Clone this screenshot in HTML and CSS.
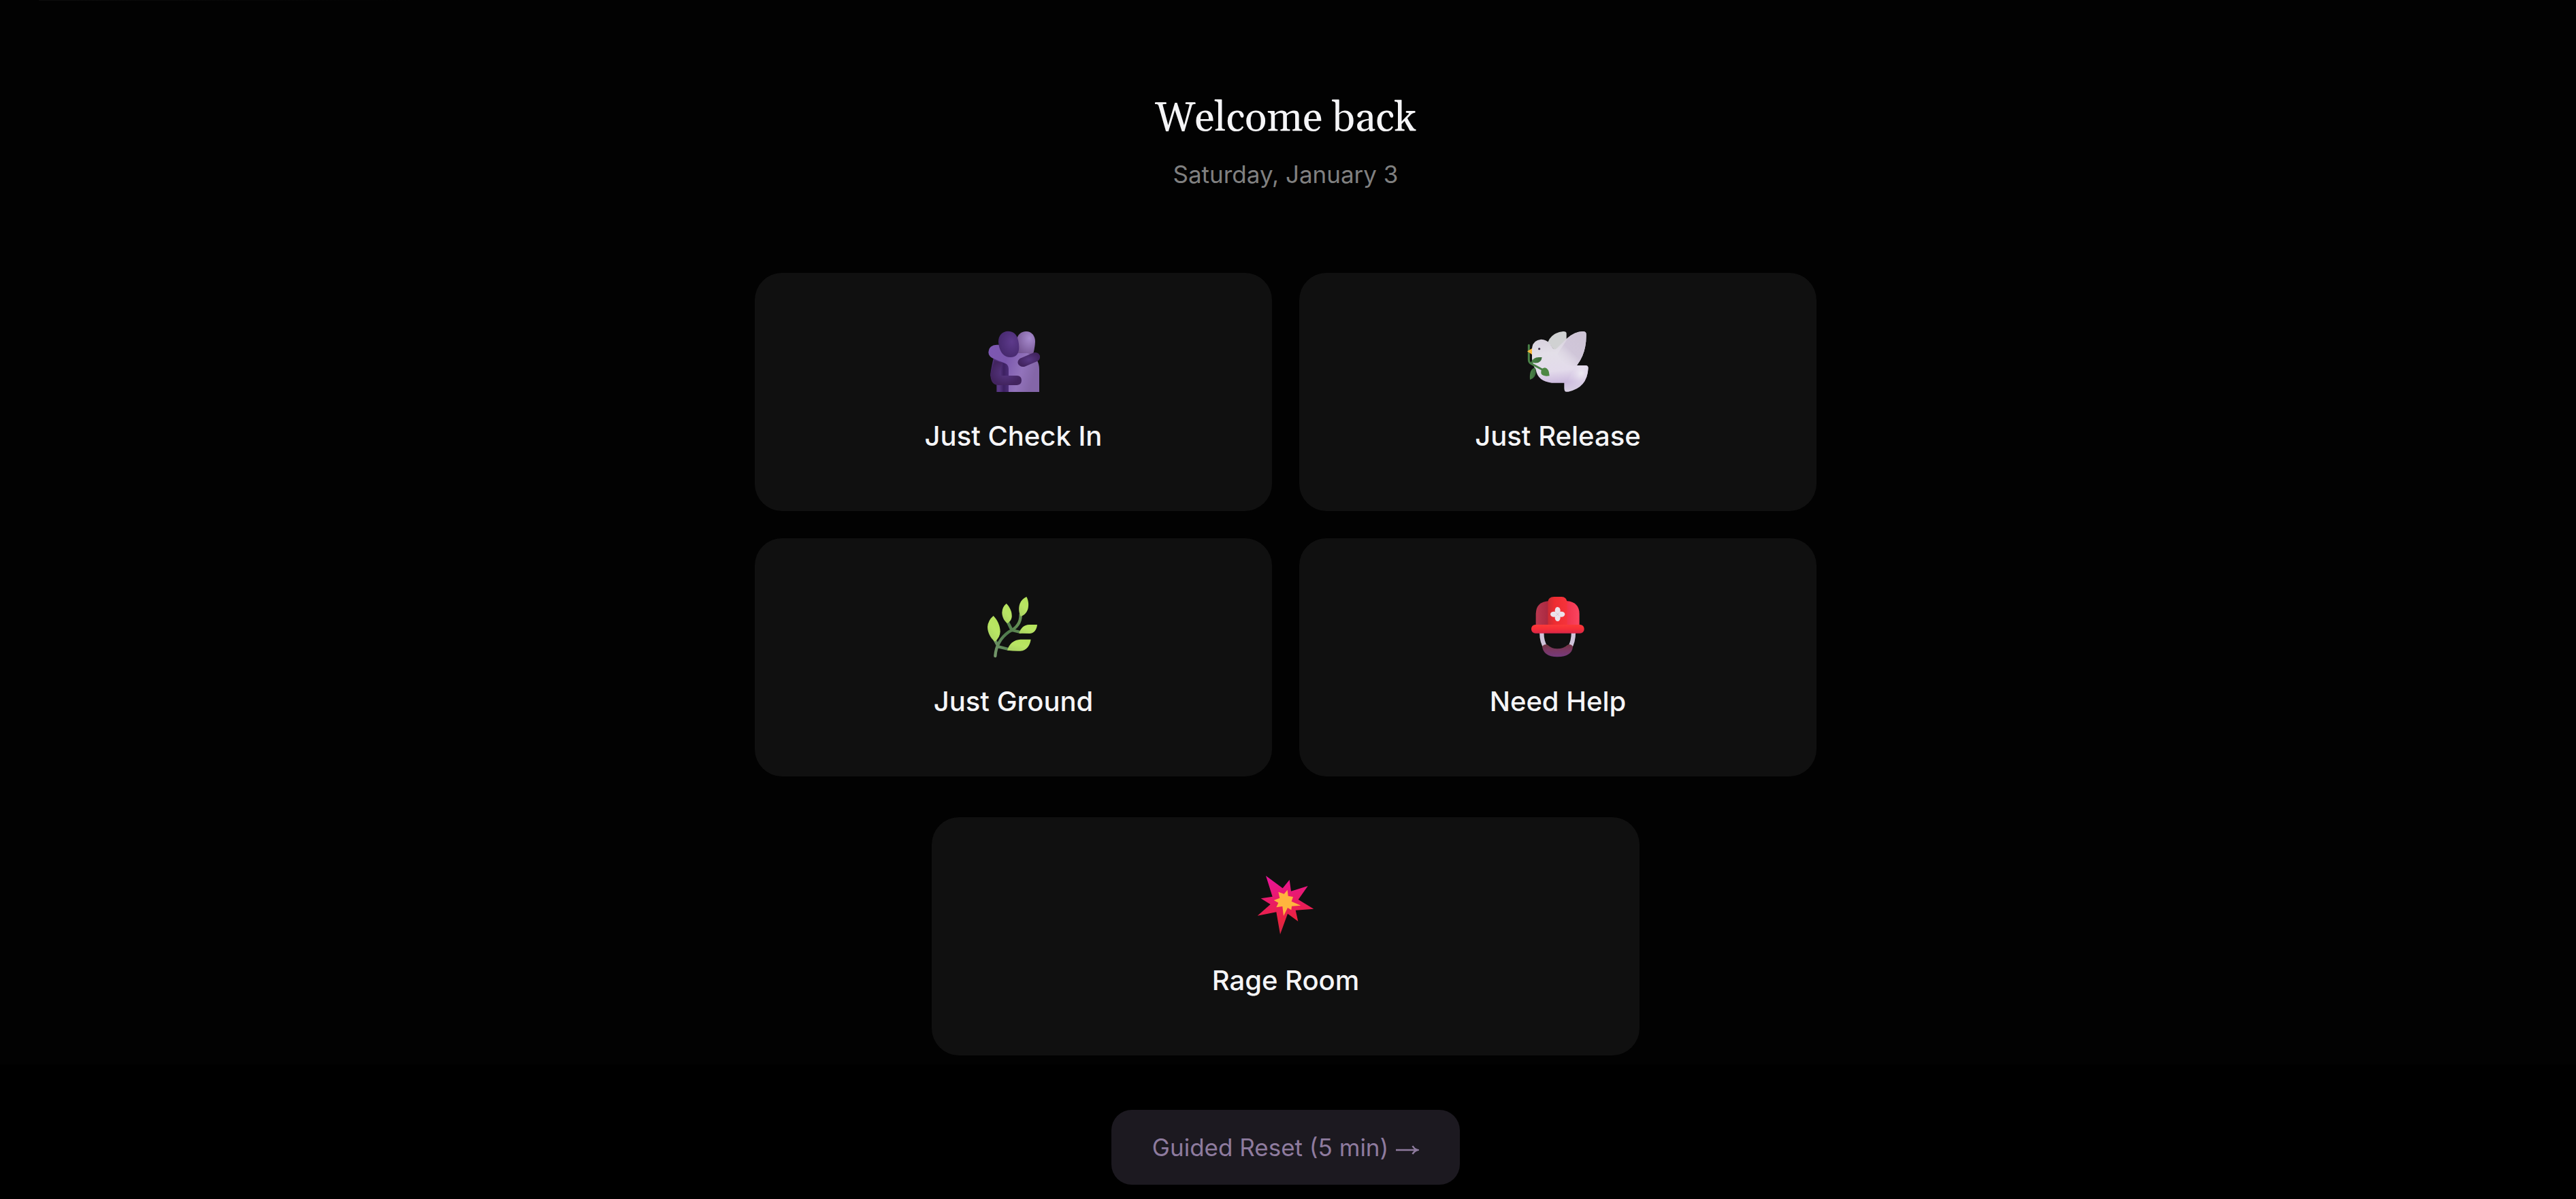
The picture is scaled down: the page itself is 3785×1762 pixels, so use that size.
FILE: index.html
```html
<!DOCTYPE html>
<html lang="en">
<head>
  <meta charset="UTF-8">
  <title>Welcome back</title>
  <link rel="stylesheet" href="styles.css">
</head>
<body>

  <main class="home">
    <header class="header">
      <h1 class="title">Welcome back</h1>
      <p class="date">Saturday, January 3</p>
    </header>

    <div class="cards">
      <button class="card">
        <svg class="icon" viewBox="-3 0 360 360">
          <defs>
            <radialGradient id="hugHead" cx="0.65" cy="0.4" r="0.7">
              <stop offset="0" stop-color="#5d3a8b"/>
              <stop offset="1" stop-color="#44276b"/>
            </radialGradient>
            <radialGradient id="hugHeadBack" cx="0.7" cy="0.3" r="0.8">
              <stop offset="0" stop-color="#a78bce"/>
              <stop offset="1" stop-color="#735391"/>
            </radialGradient>
            <linearGradient id="hugBody" x1="0" y1="0" x2="1" y2="0.3">
              <stop offset="0" stop-color="#7d58b4"/>
              <stop offset="0.4" stop-color="#7b57ad"/>
              <stop offset="0.75" stop-color="#9273bb"/>
              <stop offset="1" stop-color="#8466a8"/>
            </linearGradient>
            <linearGradient id="hugSide" x1="0" y1="0" x2="1" y2="0">
              <stop offset="0" stop-color="#482a72"/>
              <stop offset="0.45" stop-color="#593884"/>
              <stop offset="0.7" stop-color="#3c2060"/>
              <stop offset="1" stop-color="#50307d"/>
            </linearGradient>
            <radialGradient id="hugArm">
              <stop offset="0" stop-color="#583783"/>
              <stop offset="1" stop-color="#42245f"/>
            </radialGradient>
          </defs>
          <path d="M90 165L160 190V318H103V270L76 248Q74 235 90 165Z" fill="url(#hugSide)"/>
          <path d="M190 95C193 66 211 51 233 51C257 51 273 70 273 96Q272 122 264 152H196Z" fill="url(#hugHeadBack)"/>
          <path d="M156 318V216Q156 199 141 192L97 174Q67 164 67 143Q70 110 106 110H125L150 152L200 147H240Q291 165 291 218V318Z" fill="url(#hugBody)"/>
          <path d="M111 98C110 70 128 50 153 50C178 50 193 65 198 90C208 132 200 165 164 165C130 165 114 136 111 98Z" fill="url(#hugHead)"/>
          <path d="M93 177L76 240Q76 288 112 288H193Q213 286 213 267Q213 247 193 246H119Q116 238 119 222L128 190Z" fill="url(#hugArm)"/>
          <path d="M210 169L266 145Q284 140 293 156Q298 173 283 182L227 206Q209 211 198 195Q192 178 210 169Z" fill="url(#hugArm)"/>
        </svg>
        <span class="label">Just Check In</span>
      </button>

      <button class="card">
        <svg class="icon" viewBox="12 0 360 360">
          <defs>
            <linearGradient id="doveBody" x1="0.4" y1="0" x2="0.5" y2="1">
              <stop offset="0" stop-color="#d3cbd9"/>
              <stop offset="0.35" stop-color="#e3dfe8"/>
              <stop offset="0.65" stop-color="#e3dbeb"/>
              <stop offset="0.85" stop-color="#cbb9dd"/>
              <stop offset="1" stop-color="#d8cfe3"/>
            </linearGradient>
            <linearGradient id="doveWing" x1="1" y1="0" x2="0.2" y2="1">
              <stop offset="0" stop-color="#cec4d5"/>
              <stop offset="0.6" stop-color="#d0c6d9"/>
              <stop offset="1" stop-color="#e2dde8" stop-opacity="0"/>
            </linearGradient>
            <radialGradient id="doveTail" cx="0.7" cy="0.3" r="0.8">
              <stop offset="0" stop-color="#eeeaf3"/>
              <stop offset="1" stop-color="#d2c3e1" stop-opacity="0"/>
            </radialGradient>
            <linearGradient id="leafDark">
              <stop offset="0" stop-color="#4b8548"/>
              <stop offset="1" stop-color="#396a39"/>
            </linearGradient>
          </defs>
          <path d="M148 98Q166 56 216 51Q230 51 230 60V100L178 135Z" fill="#d0d1d2"/>
          <path d="M78 128Q80 90 118 86Q142 87 156 104Q164 117 171 126Q178 134 186 127L232 82Q264 52 302 51Q317 51 317 63Q319 145 276 201H315Q327 202 326 214Q321 300 238 317H228Q220 317 220 300V278H165Q103 271 95 220Q80 200 78 170Z" fill="url(#doveBody)"/>
          <path d="M190 150L236 82Q266 52 302 51Q317 51 317 63Q319 145 276 201Q220 215 190 150Z" fill="url(#doveWing)"/>
          <path d="M270 201H315Q327 202 326 214Q321 300 238 317L225 290Z" fill="url(#doveTail)"/>
          <circle cx="110" cy="128" r="5" fill="#45334d"/>
          <path d="M64 112V176Q64 188 76 194L128 222" fill="none" stroke="#4a8147" stroke-width="9" stroke-linecap="round"/>
          <path d="M74 189Q83 163 112 165H122Q119 193 88 190Z" fill="url(#leafDark)"/>
          <path d="M91 211Q65 218 69 264Q98 256 95 220Z" fill="url(#leafDark)"/>
          <path d="M118 235Q116 213 135 211Q154 215 155 247Q124 252 118 235Z" fill="#4d8743"/>
          <path d="M57 139L78 126V153Z" fill="#f8b73c"/>
        </svg>
        <span class="label">Just Release</span>
      </button>

      <button class="card">
        <svg class="icon" viewBox="-3 0 360 360">
          <defs>
            <linearGradient id="leaf" x1="0.8" y1="0" x2="0.2" y2="1">
              <stop offset="0" stop-color="#b4e25a"/>
              <stop offset="0.5" stop-color="#b9e564"/>
              <stop offset="1" stop-color="#a9d261"/>
            </linearGradient>
            <linearGradient id="stem" x1="0" y1="1" x2="1" y2="0">
              <stop offset="0" stop-color="#75986b"/>
              <stop offset="0.5" stop-color="#4e7a4c"/>
              <stop offset="1" stop-color="#6c9657"/>
            </linearGradient>
          </defs>
          <path d="M97 312Q102 245 158 205Q210 180 209 130M94 240L111 271L155 282M151 160L170 198L208 207" fill="none" stroke="url(#stem)" stroke-width="13" stroke-linecap="round" stroke-linejoin="round"/>
          <path d="M89 135C107 153 119 180 119 205Q118 230 96 249C78 236 63 210 63 184Q65 155 89 135Z" fill="url(#leaf)"/>
          <path d="M146 81C160 94 172 118 170 140Q167 158 151 168C136 158 127 140 127 120Q128 96 146 81Z" fill="url(#leaf)"/>
          <path d="M235 51C244 68 246 90 240 108Q232 130 210 138C200 122 199 98 206 80Q215 60 235 51Z" fill="url(#leaf)"/>
          <path d="M202 212C208 190 225 174 246 174H282C280 196 268 213 248 213Z" fill="url(#leaf)"/>
          <path d="M150 287C158 258 180 240 208 239H254C250 265 236 288 208 290Q180 291 150 287Z" fill="url(#leaf)"/>
        </svg>
        <span class="label">Just Ground</span>
      </button>

      <button class="card">
        <svg class="icon" viewBox="-3 0 360 360">
          <defs>
            <linearGradient id="helmetShell">
              <stop offset="0" stop-color="#b9384f"/>
              <stop offset="0.3" stop-color="#a9273f"/>
              <stop offset="0.7" stop-color="#f0324b"/>
              <stop offset="1" stop-color="#fb4560"/>
            </linearGradient>
            <linearGradient id="helmetRidge">
              <stop offset="0" stop-color="#c92c35"/>
              <stop offset="0.35" stop-color="#ee2c31"/>
              <stop offset="1" stop-color="#f5333b"/>
            </linearGradient>
            <linearGradient id="helmetBrim" x1="0" y1="0" x2="0" y2="1">
              <stop offset="0" stop-color="#fb3a39"/>
              <stop offset="0.5" stop-color="#f52e38"/>
              <stop offset="1" stop-color="#d72648"/>
            </linearGradient>
            <linearGradient id="helmetPad" x1="0" y1="0" x2="0" y2="1">
              <stop offset="0" stop-color="#71343f"/>
              <stop offset="0.5" stop-color="#7a3764"/>
              <stop offset="1" stop-color="#743a7b"/>
            </linearGradient>
          </defs>
          <path d="M106 205Q105 250 124 276M246 205Q246 250 229 276" fill="none" stroke="#cfc3da" stroke-width="19"/>
          <path d="M108 270Q118 256 132 263Q150 280 175 280Q201 280 220 263Q235 256 243 270Q240 315 176 316Q113 315 108 270Z" fill="url(#helmetPad)"/>
          <path d="M80 180V125Q82 72 138 70H218Q270 74 272 125V180Z" fill="url(#helmetShell)"/>
          <path d="M133 178V73Q135 52 160 51H194Q214 52 218 73V178Z" fill="url(#helmetRidge)"/>
          <rect x="60" y="174" width="233" height="38" rx="18" fill="url(#helmetBrim)"/>
          <g fill="#ebe3ec">
            <ellipse cx="176" cy="112" rx="12" ry="16"/>
            <ellipse cx="176" cy="143" rx="12" ry="16"/>
            <ellipse cx="160" cy="128" rx="16" ry="12"/>
            <ellipse cx="192" cy="128" rx="16" ry="12"/>
          </g>
          <path d="M169 121L183 135M183 121L169 135" stroke="#d3a6b4" stroke-width="1.5"/>
        </svg>
        <span class="label">Need Help</span>
      </button>
    </div>

    <button class="card card-wide">
      <svg class="icon" viewBox="-3 0 360 360">
        <defs>
          <linearGradient id="burst" x1="0.4" y1="0" x2="0.5" y2="1">
            <stop offset="0" stop-color="#e9149a"/>
            <stop offset="0.45" stop-color="#e91b63"/>
            <stop offset="0.75" stop-color="#e9233f"/>
            <stop offset="1" stop-color="#cf2545"/>
          </linearGradient>
        </defs>
        <path d="M90 51L164 106L194 69L201 119L275 96L233 156L301 197L221 203L232 252L186 218L153 309L136 211L53 227L110 177L68 151L119 143Z" fill="url(#burst)"/>
        <path d="M145 122L170 131L185 113L188 140L210 144L203 164L244 182L204 185L202 202L186 192L168 228L163 186L136 190L145 170L125 159L151 149Z" fill="#ffb43e"/>
      </svg>
      <span class="label">Rage Room</span>
    </button>

    <button class="reset">Guided Reset (5 min) <svg class="arrow" viewBox="0 0 35 14"><path d="M1 7H33M25.5 1Q28 5.500 33 7Q28 8.500 25.500 13"/></svg></button>
  </main>

</body>
</html>
```
FILE: styles.css
```css
* {
  box-sizing: border-box;
}

body {
  margin: 0;
  height: 1762px;
  overflow: hidden;
  background: #000;
  font-family: Inter, sans-serif;
  color: #f5f5f7;
}

.home {
  display: flex;
  flex-direction: column;
  align-items: center;
  width: 100%;
  height: 1762px;
  padding: 130px 7px 0 0;
  background:
    linear-gradient(to right, transparent 57px, #0d0d0d 57px, #020202 600px) 0 0 / 100% 1px no-repeat,
    linear-gradient(#020202, #020202) 0 0 / 100% 1564px no-repeat;
}

.header {
  display: flex;
  flex-direction: column;
  align-items: center;
  height: 271px;
}

.title {
  margin: 0;
  font-family: Georgia, Gelasio, "Liberation Serif", serif;
  font-size: 60px;
  font-weight: 400;
  line-height: 90px;
}

.date {
  margin: 10px 0 0;
  font-size: 35px;
  line-height: 52px;
  color: #808080;
}

.cards {
  display: grid;
  grid-template-columns: 760px 760px;
  gap: 40px;
}

.card {
  display: flex;
  flex-direction: column;
  align-items: center;
  gap: 21px;
  height: 350px;
  padding: 69px 0 80px;
  border: none;
  border-radius: 40px;
  background: #101010;
  color: #f5f5f7;
  font-family: inherit;
  cursor: pointer;
}

.card-wide {
  width: 1040px;
  margin-top: 60px;
}

.icon {
  width: 120px;
  height: 120px;
}

.label {
  font-size: 40px;
  font-weight: 500;
  line-height: 60px;
}

.reset {
  width: 512px;
  height: 110px;
  margin-top: 80px;
  padding: 0;
  border: none;
  border-radius: 30px;
  background: #1c1920;
  color: #8e7b9e;
  font-family: inherit;
  font-size: 35px;
  cursor: pointer;
}

.arrow {
  width: 35px;
  height: 14px;
  vertical-align: 2px;
  fill: none;
  stroke: currentColor;
  stroke-width: 2.4;
}
```
